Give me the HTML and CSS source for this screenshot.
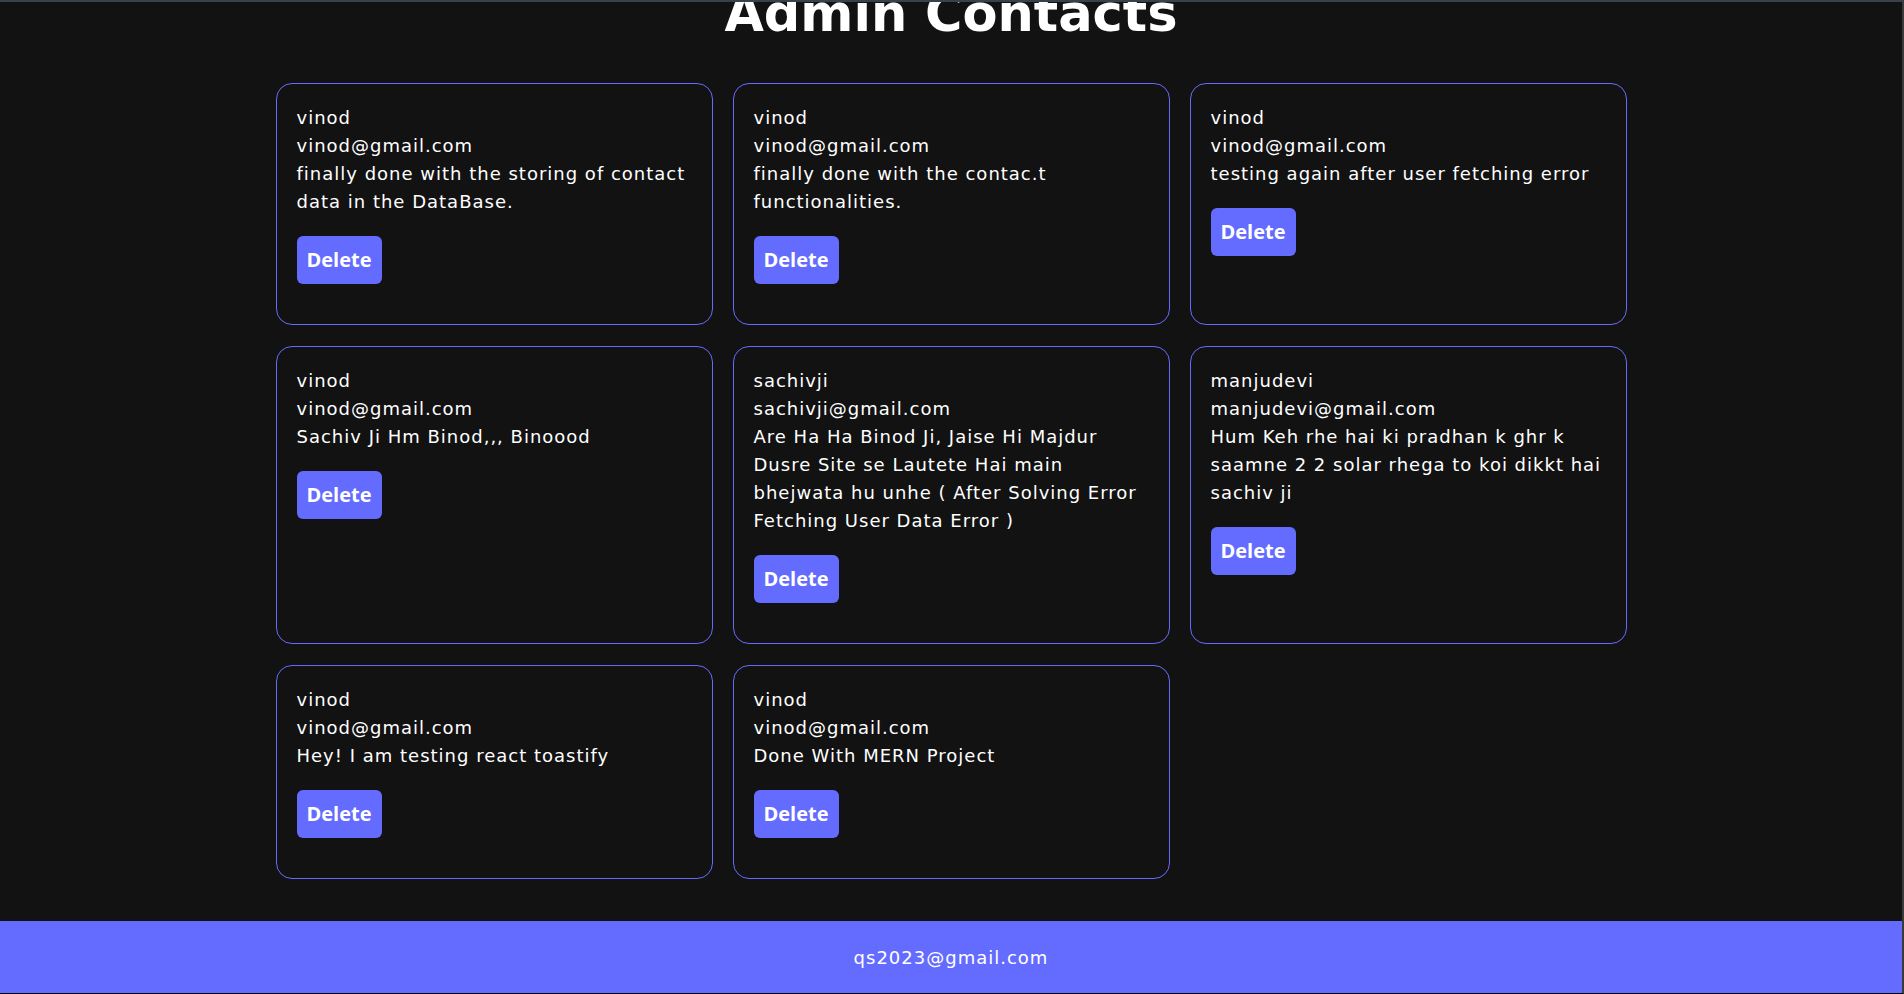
FILE: index.html
```html
<!DOCTYPE html>
<html lang="en">
<head>
<meta charset="utf-8">
<title>Admin Contacts</title>
<link rel="stylesheet" href="styles.css">
</head>
<body>
<div class="frame">
  <main class="admin">
    <h1 class="admin-title">Admin Contacts</h1>
    <div class="contact-grid">
      <div class="contact-card">
        <p>vinod</p>
        <p>vinod@gmail.com</p>
        <p>finally done with the storing of contact data in the DataBase.</p>
        <button class="btn-delete">Delete</button>
      </div>
      <div class="contact-card">
        <p>vinod</p>
        <p>vinod@gmail.com</p>
        <p>finally done with the contac.t functionalities.</p>
        <button class="btn-delete">Delete</button>
      </div>
      <div class="contact-card">
        <p>vinod</p>
        <p>vinod@gmail.com</p>
        <p>testing again after user fetching error</p>
        <button class="btn-delete">Delete</button>
      </div>
      <div class="contact-card">
        <p>vinod</p>
        <p>vinod@gmail.com</p>
        <p>Sachiv Ji Hm Binod,,, Binoood</p>
        <button class="btn-delete">Delete</button>
      </div>
      <div class="contact-card">
        <p>sachivji</p>
        <p>sachivji@gmail.com</p>
        <p>Are Ha Ha Binod Ji, Jaise Hi Majdur Dusre Site se Lautete Hai main bhejwata hu unhe ( After Solving Error Fetching User Data Error )</p>
        <button class="btn-delete">Delete</button>
      </div>
      <div class="contact-card">
        <p>manjudevi</p>
        <p>manjudevi@gmail.com</p>
        <p>Hum Keh rhe hai ki pradhan k ghr k saamne 2 2 solar rhega to koi dikkt hai sachiv ji</p>
        <button class="btn-delete">Delete</button>
      </div>
      <div class="contact-card">
        <p>vinod</p>
        <p>vinod@gmail.com</p>
        <p>Hey! I am testing react toastify</p>
        <button class="btn-delete">Delete</button>
      </div>
      <div class="contact-card">
        <p>vinod</p>
        <p>vinod@gmail.com</p>
        <p>Done With MERN Project</p>
        <button class="btn-delete">Delete</button>
      </div>
    </div>
  </main>
  <footer class="site-footer">
    <p>qs2023@gmail.com</p>
  </footer>
</div>
</body>
</html>
```
FILE: styles.css
```css
* {
  box-sizing: border-box;
}

html, body {
  margin: 0;
  padding: 0;
  background: #121212;
}

body {
  font-family: "DejaVu Sans", "Noto Sans", sans-serif;
  color: #ffffff;
}

.frame {
  height: 994px;
  border-top: 2px solid #3b414c;
  border-right: 2px solid #3a3a3a;
  border-bottom: 1px solid #000000;
  display: flex;
  flex-direction: column;
  overflow: hidden;
}

.admin {
  flex: 1;
  overflow: hidden;
  padding-bottom: 42px;
}

.admin-title {
  margin: -14px 0 44px;
  font-size: 51px;
  line-height: 51px;
  font-weight: 700;
  text-align: center;
  color: #ffffff;
}

.contact-grid {
  width: 1351px;
  margin: 0 auto;
  display: grid;
  grid-template-columns: repeat(3, 1fr);
  column-gap: 20px;
  row-gap: 21px;
}

.contact-card {
  border: 1px solid #646cff;
  border-radius: 16px;
  padding: 20px;
}

.contact-card p {
  margin: 0;
  font-size: 18px;
  line-height: 28px;
  letter-spacing: 1px;
}

.btn-delete {
  margin: 20px 0;
  height: 48px;
  padding: 10px 10px;
  border: none;
  border-radius: 6px;
  background: #646cff;
  color: #ffffff;
  font-family: "Open Sans", "DejaVu Sans", sans-serif;
  font-weight: 700;
  font-size: 20px;
  line-height: 28px;
  cursor: pointer;
}

.site-footer {
  height: 72px;
  flex: 0 0 72px;
  background: #646cff;
  display: flex;
  align-items: center;
  justify-content: center;
}

.site-footer p {
  margin: 0;
  font-size: 18px;
  letter-spacing: 1px;
}
```
